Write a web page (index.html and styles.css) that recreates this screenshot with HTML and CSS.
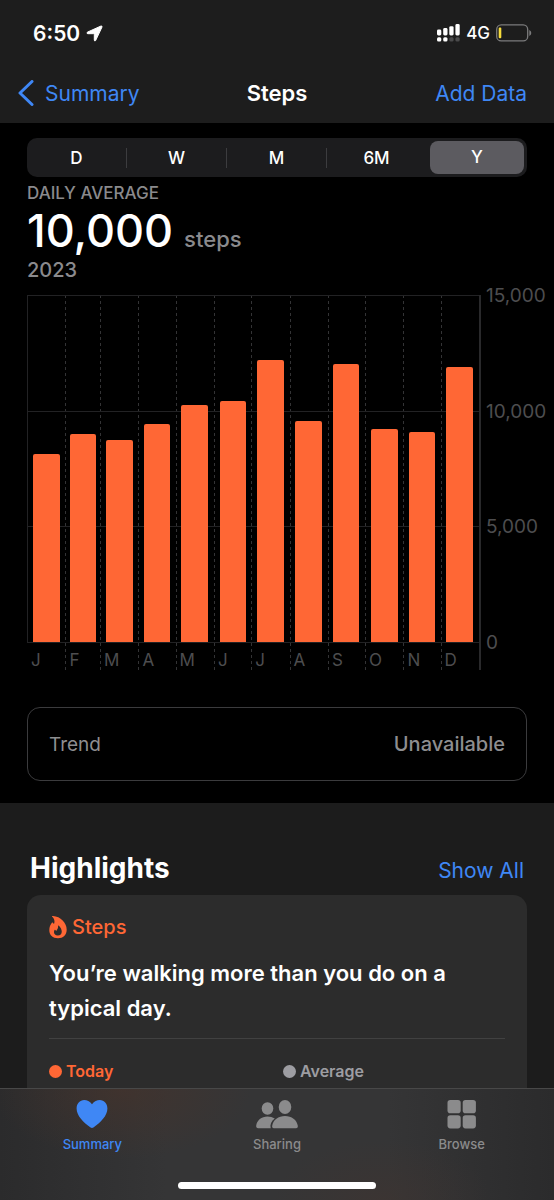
FILE: index.html
```html
<!DOCTYPE html>
<html lang="en">
<head>
<meta charset="utf-8">
<meta name="viewport" content="width=device-width, initial-scale=1">
<title>Steps</title>
<link rel="stylesheet" href="styles.css">
</head>
<body>
<header class="header">
  <div class="status">
    <div class="status-group">
      <span class="time">6:50</span>
      <svg class="location" viewBox="0 0 17 17" aria-hidden="true"><path d="M15 1 1.300 7.200Q.5 8.700 1.800 8.700H7.600Q8.300 8.700 8.300 9.400V15.200Q8.500 16.500 9.600 15.600L16 2Q16.200.7 15 1Z" fill="#fff" stroke="#fff" stroke-width="1" stroke-linejoin="round"/></svg>
    </div>
    <div class="status-group status-right">
      <svg class="signal" viewBox="0 0 23 18" aria-hidden="true">
        <g fill="#fff"><rect x="0" y="5.500" width="4.300" height="6" rx="1.400"/><rect x="6.200" y="4" width="4.300" height="7.500" rx="1.400"/><rect x="12.300" y="2.200" width="4.300" height="9.300" rx="1.400"/><rect x="18.400" y="0" width="4.300" height="11.500" rx="1.400"/><rect x="0" y="13.300" width="4.300" height="4.300" rx="1.500"/><rect x="6.200" y="13.300" width="4.300" height="4.300" rx="1.500"/></g>
        <g fill="#4b4b4c"><rect x="12.300" y="13.300" width="4.300" height="4.300" rx="1.500"/><rect x="18.400" y="13.300" width="4.300" height="4.300" rx="1.500"/></g>
      </svg>
      <span class="network">4G</span>
      <svg class="battery" viewBox="0 0 36 18" aria-hidden="true"><rect x=".7" y=".9" width="31" height="16" rx="4.500" fill="none" stroke="#7b7b7c" stroke-width="1.300"/><path d="M33.300 6v6q2-.9 2-3t-2-3Z" fill="#7b7b7c"/><rect x="2.700" y="3.500" width="2.600" height="10.800" rx="1" fill="#f7dc3c"/></svg>
    </div>
  </div>
  <nav class="nav">
    <a class="back" href="#"><svg class="chevron" viewBox="0 0 16 26" aria-hidden="true"><path d="M14 1.500 2 13l12 11.500" fill="none" stroke="currentColor" stroke-width="3" stroke-linecap="round" stroke-linejoin="round"/></svg>Summary</a>
    <h1 class="title">Steps</h1>
    <button class="text-button add" type="button">Add Data</button>
  </nav>
</header>

<main class="main">
  <section class="overview">
    <div class="segments" role="radiogroup" aria-label="Period">
      <label class="segment"><input type="radio" name="period"><span>D</span></label>
      <label class="segment"><input type="radio" name="period"><span>W</span></label>
      <label class="segment"><input type="radio" name="period"><span>M</span></label>
      <label class="segment"><input type="radio" name="period"><span>6M</span></label>
      <label class="segment"><input type="radio" name="period" checked><span>Y</span></label>
    </div>
    <p class="caption">DAILY AVERAGE</p>
    <p class="value">10,000 <span class="unit">steps</span></p>
    <p class="year">2023</p>

    <div class="chart">
      <div class="plot">
        <div class="month"><div class="track"><div class="bar" style="height:54.3%"></div></div><span class="month-name">J</span></div>
        <div class="month"><div class="track"><div class="bar" style="height:59.9%"></div></div><span class="month-name">F</span></div>
        <div class="month"><div class="track"><div class="bar" style="height:58.2%"></div></div><span class="month-name">M</span></div>
        <div class="month"><div class="track"><div class="bar" style="height:62.8%"></div></div><span class="month-name">A</span></div>
        <div class="month"><div class="track"><div class="bar" style="height:68.4%"></div></div><span class="month-name">M</span></div>
        <div class="month"><div class="track"><div class="bar" style="height:69.4%"></div></div><span class="month-name">J</span></div>
        <div class="month"><div class="track"><div class="bar" style="height:81.4%"></div></div><span class="month-name">J</span></div>
        <div class="month"><div class="track"><div class="bar" style="height:63.8%"></div></div><span class="month-name">A</span></div>
        <div class="month"><div class="track"><div class="bar" style="height:80.1%"></div></div><span class="month-name">S</span></div>
        <div class="month"><div class="track"><div class="bar" style="height:61.4%"></div></div><span class="month-name">O</span></div>
        <div class="month"><div class="track"><div class="bar" style="height:60.4%"></div></div><span class="month-name">N</span></div>
        <div class="month"><div class="track"><div class="bar" style="height:79.3%"></div></div><span class="month-name">D</span></div>
      </div>
      <div class="scale"><span>15,000</span><span>10,000</span><span>5,000</span><span>0</span></div>
    </div>

    <button class="trend" type="button"><span>Trend</span><span class="trend-value">Unavailable</span></button>
  </section>

  <section class="highlights">
    <div class="section-head">
      <h2 class="section-title">Highlights</h2>
      <a class="text-button" href="#">Show All</a>
    </div>
    <article class="card">
      <h3 class="card-title"><svg class="flame" viewBox="0 0 18 23" aria-hidden="true"><path fill="#ff6735" fill-rule="evenodd" d="M3.200.7C2.600.2 3.200-.1 4 .1 11.500.6 17.700 6.800 17.700 13.800c0 5.200-3.600 8.500-8.700 8.500-5.300 0-8.700-3.200-8.700-8 0-3 1.100-5.700 2.400-7.300.6-.7 1.100-.6 1.600.2L5 8.100C6 5.300 5.400 2.500 3.200.7ZM9 9.800c.5 2.600-.9 3.600-1.700 5.100l-1-.9c-.5-.4-.8-.2-1 .5-1 3 .6 4.900 3.500 4.900 3 0 4.400-2.200 3.800-5-.5-2.200-1.700-4-3.300-4.900-.3-.2-.4 0-.3.300Z"/></svg>Steps</h3>
      <p class="message">You’re walking more than you do on a typical day.</p>
      <div class="legend">
        <span class="legend-item today">Today</span>
        <span class="legend-item average">Average</span>
      </div>
    </article>
  </section>
</main>

<footer class="footer">
  <nav class="tabs" aria-label="Main">
    <a class="tab tab-active" href="#"><svg class="tab-icon" viewBox="0 0 34 30" aria-hidden="true"><path fill="currentColor" d="M17 4.300C14.800 1.300 12 0 9.200 0 4.800 0 1.600 3.600 1.600 8.500c0 7.400 6.900 13.800 14 19.100q1.400.9 2.800 0c7.100-5.300 14-11.700 14-19.100C32.400 3.600 29.200 0 24.800 0 22 0 19.200 1.300 17 4.300Z"/></svg>Summary</a>
    <a class="tab" href="#"><svg class="tab-icon tab-icon-wide" viewBox="0 0 44 30" aria-hidden="true"><g fill="currentColor"><ellipse cx="12.500" cy="8.500" rx="5.800" ry="6.200"/><ellipse cx="30" cy="7" rx="6.300" ry="7"/><path d="M3.200 28.300C1.700 28.300 1 27.300 1.200 25.800 1.900 20.300 6.500 16.500 12.500 16.500q4 0 7.300 2.100c-3.500 2.500-5 6-4.100 9.700Z"/><path d="M19 28.300C17.400 28.300 16.900 27.300 17.200 25.800 18 19.800 23.500 16 30 16s12 3.800 12.800 9.800c.2 1.500-.3 2.500-1.800 2.500Z"/></g></svg>Sharing</a>
    <a class="tab" href="#"><svg class="tab-icon" viewBox="0 0 34 30" aria-hidden="true"><g fill="currentColor"><rect x="2.500" y="0" width="13.200" height="13.200" rx="2.800"/><rect x="17.700" y="0" width="13.200" height="13.200" rx="2.800"/><rect x="2.500" y="15.200" width="13.200" height="13.200" rx="2.800"/><rect x="17.700" y="15.200" width="13.200" height="13.200" rx="2.800"/></g></svg>Browse</a>
  </nav>
  <div class="home-indicator"></div>
</footer>
</body>
</html>
```

FILE: styles.css
```css
* { box-sizing: border-box; }

body {
  margin: 0;
  height: 100vh;
  display: flex;
  flex-direction: column;
  overflow: hidden;
  background: #1c1c1c;
  color: #fff;
  font-family: Inter, Roboto, "Liberation Sans", sans-serif;
}

h1, h2, h3, p { margin: 0; font-weight: inherit; }
svg { display: block; flex: none; }
a { text-decoration: none; }
button { border: 0; background: none; padding: 0; font: inherit; color: inherit; }

.header { flex: none; background: #1d1d1d; }

.status {
  height: 66px;
  padding: 0 22px 0 33px;
  display: flex;
  align-items: center;
  justify-content: space-between;
}
.status-group { display: flex; align-items: center; gap: 6px; }
.time { font-size: 21px; font-weight: 600; }
.location { width: 17px; height: 17px; }
.signal { width: 23px; height: 18px; }
.network { font-size: 17px; font-weight: 500; }
.battery { width: 36px; height: 18px; }

.nav {
  height: 57px;
  padding: 0 18px 3px;
  display: grid;
  grid-template-columns: 1fr auto 1fr;
  align-items: center;
  font-size: 21px;
}
.back { display: flex; align-items: center; gap: 11px; color: #3f87f5; }
.chevron { width: 16px; height: 26px; }
.title { font-size: 22px; font-weight: 600; }
.text-button { color: #3f87f5; font-size: 21px; }
.add { justify-self: end; margin-right: 9px; }

.main { flex: 1; min-height: 0; display: flex; flex-direction: column; overflow: hidden; }
.overview { flex: none; background: #000; padding: 15px 27px 22px; }

.segments {
  height: 39px;
  padding: 3px 0;
  display: grid;
  grid-template-columns: repeat(5, 1fr);
  border-radius: 10px;
  background: #1c1c1e;
  font-size: 17px;
  font-weight: 500;
}
.segment { display: flex; align-items: center; position: relative; }
.segment input { position: absolute; opacity: 0; margin: 0; }
.segment span { flex: 1; text-align: center; line-height: 20px; border-right: 1px solid #3c3c3f; }
.segment:nth-last-child(-n+2) span { border-right-color: transparent; }
.segment input:checked + span {
  margin: 0 3px;
  line-height: 33px;
  border: 0;
  border-radius: 8px;
  background: #5c5b60;
}

.caption { margin-top: 5px; font-size: 17px; font-weight: 500; line-height: 22px; color: #8a8a8d; }
.value {
  display: flex;
  align-items: baseline;
  gap: 11px;
  font-size: 45px;
  font-weight: 500;
  line-height: 54px;
}
.unit { font-size: 22px; line-height: 24px; color: #8a8a8d; }
.year { font-size: 20px; font-weight: 500; line-height: 24px; color: #8a8a8d; }

.chart { margin: 13px -19px 0 0; display: flex; gap: 5px; color: #4d4d4f; font-size: 19px; }
.plot {
  flex: 1;
  display: grid;
  grid-template-columns: 31fr 28fr 31fr 30fr 31fr 30fr 31fr 31fr 30fr 31fr 30fr 31fr;
  border-right: 2px solid #29292b;
}
.month {
  background: repeating-linear-gradient(#333335 0 3px, transparent 3px 6px) left / 1px 100% no-repeat;
}
.month:first-child { background: linear-gradient(#222224, #222224) left top / 1px 348px no-repeat; }
.track {
  height: 348px;
  padding-bottom: 1px;
  display: flex;
  align-items: flex-end;
  justify-content: center;
  background:
    linear-gradient(#222224, #222224) 0 0 / 100% 1px no-repeat,
    linear-gradient(#222224, #222224) 0 33.3% / 100% 1px no-repeat,
    linear-gradient(#222224, #222224) 0 66.7% / 100% 1px no-repeat,
    linear-gradient(#222224, #222224) 0 100% / 100% 1px no-repeat;
}
.bar { width: 70%; max-width: 27px; min-width: 26px; border-radius: 2px 2px 0 0; background: #ff6735; }
.month-name { display: block; padding: 7px 0 0 4px; font-size: 17px; line-height: 20px; }
.scale {
  width: 60px;
  height: 371px;
  margin-top: -11px;
  display: flex;
  flex-direction: column;
  justify-content: space-between;
  line-height: 24px;
}

.trend {
  width: 100%;
  margin-top: 37px;
  height: 74px;
  padding: 0 21px;
  display: flex;
  align-items: center;
  justify-content: space-between;
  border: 1px solid #3b3b3d;
  border-radius: 13px;
  color: #8e8e90;
  font-size: 19px;
}
.trend-value { font-size: 20px; font-weight: 500; }

.highlights { flex: 1; padding: 0 27px; display: flex; flex-direction: column; }
.section-head {
  height: 92px;
  padding: 40px 3px 0;
  display: flex;
  align-items: baseline;
  justify-content: space-between;
}
.section-title { margin-top: 8px; font-size: 28px; font-weight: 700; line-height: 34px; }
.card { flex: 1; padding: 19px 22px 0; border-radius: 14px 14px 0 0; background: #2c2c2c; }
.card-title {
  display: flex;
  align-items: center;
  gap: 5px;
  color: #ff6735;
  font-size: 20px;
  font-weight: 500;
  line-height: 26px;
}
.flame { width: 18px; height: 23px; }
.message {
  margin-top: 16px;
  padding-bottom: 12px;
  border-bottom: 1px solid #414141;
  font-size: 22px;
  font-weight: 600;
  line-height: 35px;
}
.legend {
  margin-top: 21px;
  display: grid;
  grid-template-columns: 1fr 1fr;
  gap: 12px;
  font-size: 16px;
  font-weight: 600;
  line-height: 22px;
}
.legend-item { display: flex; align-items: center; gap: 4px; }
.legend-item::before { content: ""; width: 13px; height: 13px; border-radius: 50%; background: currentColor; }
.today { color: #ff6735; }
.average { color: #9d9da2; }

.footer {
  flex: none;
  height: 112px;
  display: flex;
  flex-direction: column;
  justify-content: space-between;
  align-items: center;
  padding: 11px 0;
  border-top: 1px solid #484848;
  background:
    radial-gradient(ellipse 130px 70px at 22% 0, #46332baa, transparent),
    radial-gradient(ellipse 110px 60px at 69% 100%, #3e3431aa, transparent),
    linear-gradient(90deg, #2b2b2c, #353536 30%, #353536 70%, #2b2b2c);
}
.tabs { width: 100%; display: grid; grid-template-columns: repeat(3, 1fr); }
.tab {
  display: flex;
  flex-direction: column;
  align-items: center;
  gap: 4px;
  color: #8b8b8c;
  font-size: 13px;
  font-weight: 500;
  line-height: 20px;
}
.tab-active { color: #3f87f5; }
.tab-icon { width: 34px; height: 30px; }
.tab-icon-wide { width: 44px; }
.home-indicator { width: 198px; height: 7px; border-radius: 4px; background: #fff; }
```
